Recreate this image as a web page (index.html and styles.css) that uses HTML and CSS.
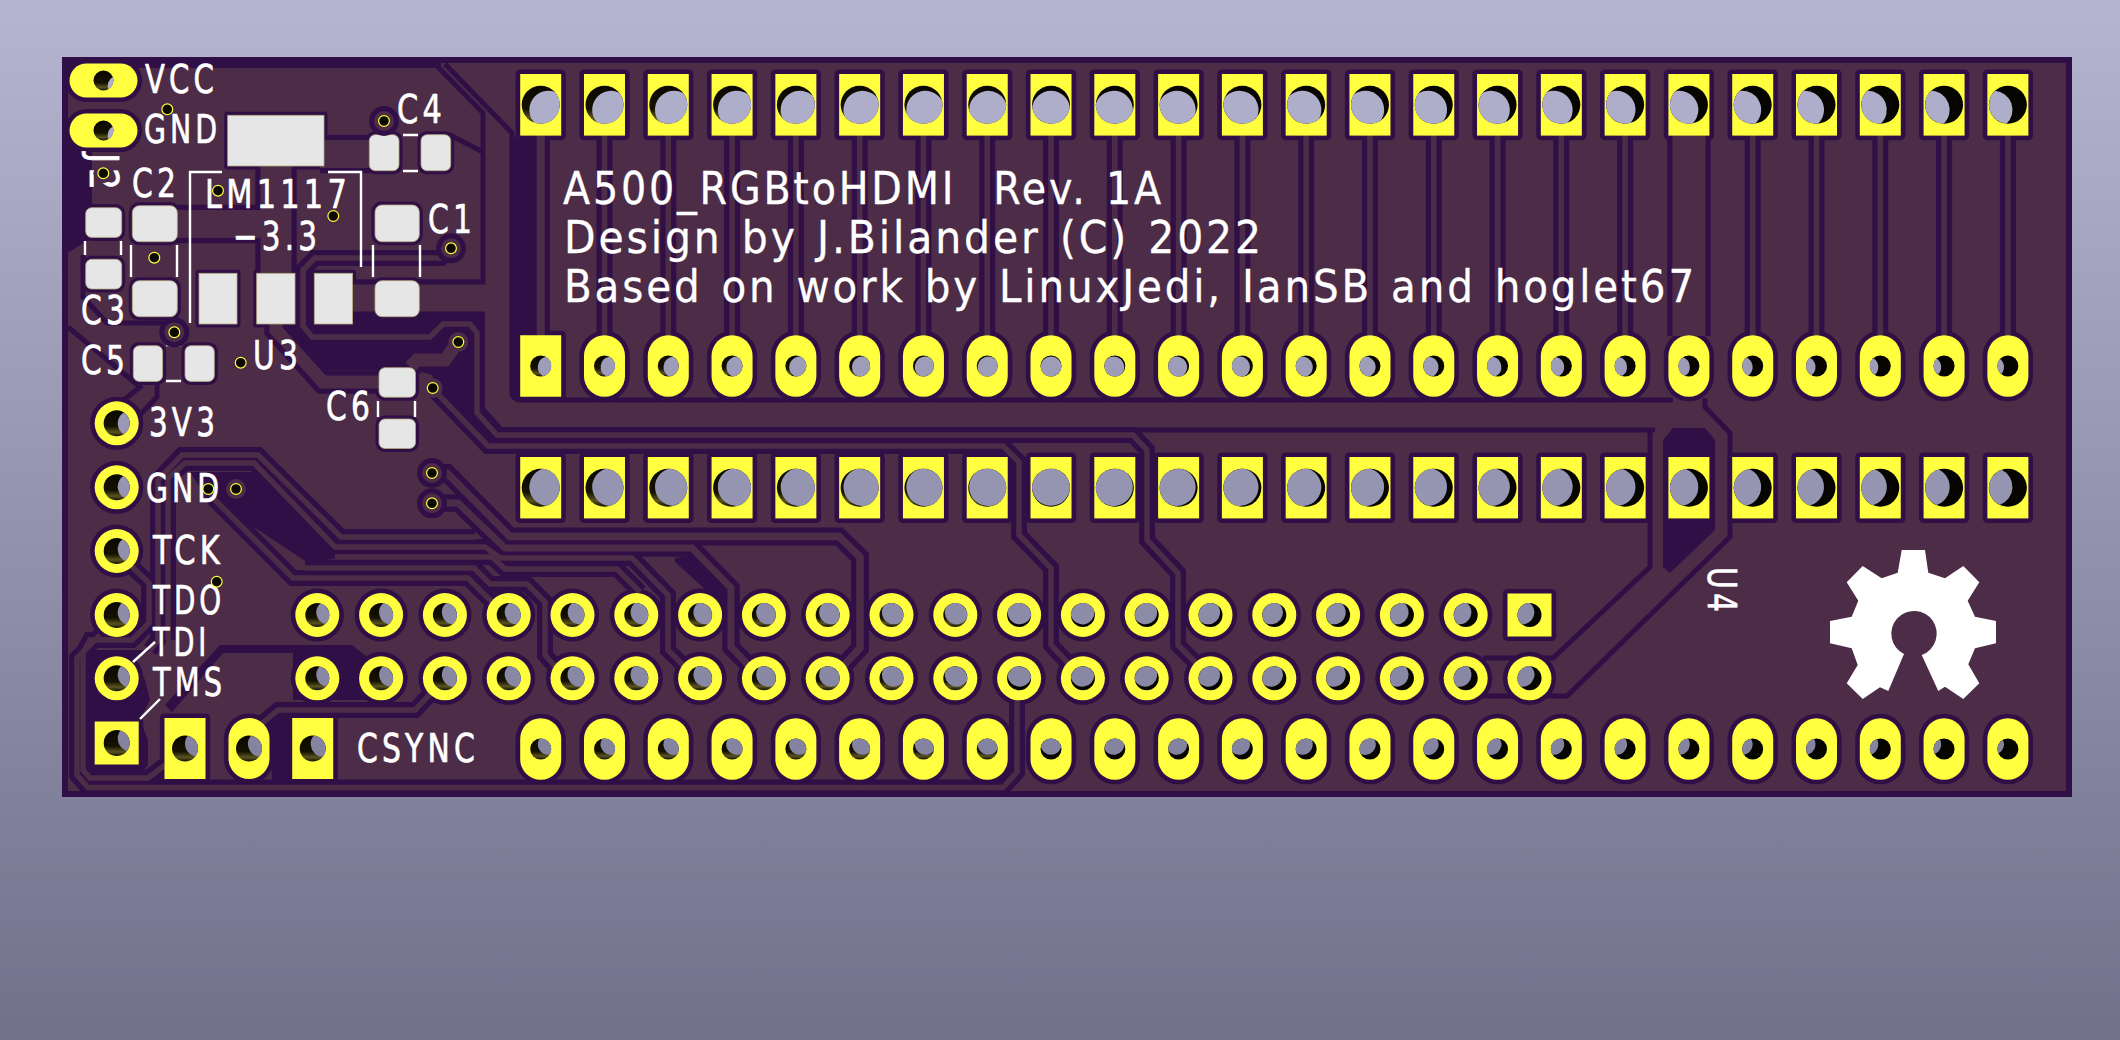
FILE: index.html
```html
<!DOCTYPE html>
<html lang="en">
<head>
<meta charset="utf-8">
<title>A500_RGBtoHDMI PCB</title>
<link rel="stylesheet" href="styles.css">
</head>
<body>
<main class="viewport">
<svg class="pcb" width="2120" height="1040" viewBox="0 0 2120 1040" xmlns="http://www.w3.org/2000/svg">
  <defs>
    <linearGradient id="wall" x1="0" y1="0" x2="0" y2="1">
      <stop offset="0" stop-color="#0a0800"/>
      <stop offset="0.62" stop-color="#151200"/>
      <stop offset="0.84" stop-color="#5a5420"/>
      <stop offset="1" stop-color="#141100"/>
    </linearGradient>
  </defs>

  <rect class="board" x="65" y="60" width="2004" height="734"/>

  <g class="no-copper">
    <path d="M62 57H441V68H62Z"/>
    <path d="M62 140L92 148V208L83 237L68 252H62Z"/>
    <path d="M500 125L512 137H537V335H520V400H512V137Z"/>
    <path d="M283 325H353V312H485V408L505 430H530V448H488L440 398L432 375L415 370H327Z"/>
    <path d="M190 472H253L332 552L345 558L307 562L217 503L197 483Z"/>
    <path d="M675 558L697 555L726 585V600H706V590L675 562Z"/>
    <path d="M91 650H150L135 660L145 680L150 700L140 720L148 740V765L142 773H90L88 770Z"/>
    <path d="M220 645H352L378 665V700H293V653H223L172 712L165 705Z"/>
    <path d="M270 718L278 712H292V780H272Z"/>
    <path d="M1663 440L1673 428H1705L1715 440V530L1670 573L1663 567Z"/>
  </g>

  <g class="copper-gap">
    <path d="M445 64L512 133V395L518 400H1673"/>
    <path d="M437 66L483 113V285"/>
    <path d="M450 135L483 152"/>
    <path d="M1130 430H1655"/>
    <path d="M1650 430V567L1553 658H1483"/>
    <path d="M1705 398V407L1730 433V537L1567 696H1483"/>
    <path d="M68 250L90 236H122"/>
    <path d="M83 255V297L107 323H165L174 332"/>
    <path d="M68 327L140 387L120 403"/>
    <path d="M157 383V397L138 417"/>
  </g>

  <g id="trace-halos"></g>
  <g id="pad-halos"></g>
  <g id="trace-cores"></g>
  <g id="pads"></g>
  <g id="holes"></g>

  <g class="silk-lines">
    <path d="M403 135H418M403 171H418"/>
    <path d="M373 245V277M420 245V277"/>
    <path d="M131 245V277M177 245V277"/>
    <path d="M85 241V255M121 241V255"/>
    <path d="M166 345H181M166 381H181"/>
    <path d="M378 401V417M415 401V417"/>
    <path d="M222 172H190V323"/>
    <path d="M328 172H361V267"/>
    <path d="M155 642L133 662"/>
    <path d="M160 699L140 719"/>
  </g>

  <g class="silk-text">
    <text x="145" y="92.5" textLength="73" lengthAdjust="spacingAndGlyphs">VCC</text>
    <text x="144" y="142.5" textLength="77" lengthAdjust="spacingAndGlyphs">GND</text>
    <text x="397" y="123" textLength="49" lengthAdjust="spacingAndGlyphs">C4</text>
    <text x="132" y="197" textLength="48" lengthAdjust="spacingAndGlyphs">C2</text>
    <text x="205" y="208" textLength="146" lengthAdjust="spacingAndGlyphs">LM1117</text>
    <text x="233" y="250" textLength="88" lengthAdjust="spacingAndGlyphs">−3.3</text>
    <text x="428" y="233" textLength="48" lengthAdjust="spacingAndGlyphs">C1</text>
    <text x="81" y="324" textLength="48" lengthAdjust="spacingAndGlyphs">C3</text>
    <text x="81" y="374" textLength="48" lengthAdjust="spacingAndGlyphs">C5</text>
    <text x="253" y="369" textLength="49" lengthAdjust="spacingAndGlyphs">U3</text>
    <text x="326" y="420" textLength="48" lengthAdjust="spacingAndGlyphs">C6</text>
    <text x="149" y="436" textLength="70" lengthAdjust="spacingAndGlyphs">3V3</text>
    <text x="146" y="502" textLength="77" lengthAdjust="spacingAndGlyphs">GND</text>
    <text x="153" y="564" textLength="71" lengthAdjust="spacingAndGlyphs">TCK</text>
    <text x="153" y="614" textLength="72" lengthAdjust="spacingAndGlyphs">TDO</text>
    <text x="153" y="656" textLength="57" lengthAdjust="spacingAndGlyphs">TDI</text>
    <text x="153" y="696" textLength="73" lengthAdjust="spacingAndGlyphs">TMS</text>
    <text x="357" y="762" textLength="122" lengthAdjust="spacingAndGlyphs">CSYNC</text>
    <text transform="translate(90 153) rotate(90)" textLength="42" lengthAdjust="spacingAndGlyphs">J2</text>
    <text transform="translate(1708 567) rotate(90)" textLength="49" lengthAdjust="spacingAndGlyphs">U4</text>
    <text class="title" x="563" y="204" textLength="601" lengthAdjust="spacingAndGlyphs">A500_RGBtoHDMI&#160;&#160;Rev. 1A</text>
    <text class="title" x="564" y="253" textLength="700" lengthAdjust="spacingAndGlyphs">Design by J.Bilander (C) 2022</text>
    <text class="title" x="564" y="302" textLength="1133" lengthAdjust="spacingAndGlyphs">Based on work by LinuxJedi, IanSB and hoglet67</text>
  </g>

  <path class="logo" d="M1901.7 550H1925L1928.3 572.7L1945 578.3L1963.3 566L1979.3 582.3L1967.7 600.7L1975 616.7L1996 621V643.3L1975 648.3L1968.3 664.3L1979.3 683.3L1963.3 699L1945 686.7L1938.3 691L1921.7 655A22.7 22.7 0 1 0 1904 654L1888.3 691L1880 687.3L1862.7 699L1846.7 683.3L1857.7 665L1851.7 648.3L1830 643.3V621L1851.7 616.7L1858.3 600.7L1846.7 582.3L1862.7 566L1881.7 578.3L1897.7 572.7Z"/>

  <g id="vias"></g>
</svg>
</main>
<script src="script.js"></script>
</body>
</html>
```

FILE: styles.css
```css
* { box-sizing: border-box; }
html, body { margin: 0; height: 100%; }
body { overflow: hidden; }
.viewport {
  display: flex;
  width: 2120px;
  height: 1040px;
  background: linear-gradient(#b5b5d1, #71718c);
}
.pcb { display: block; }
.board { fill: #4c2c47; stroke: #300f47; stroke-width: 6; }
.no-copper { fill: #300f47; }
.copper-gap { fill: none; stroke: #300f47; stroke-width: 5; }
.trace-halo { fill: none; stroke: #300f47; }
.trace-core { fill: none; stroke: #4c2c47; }
.pad-halo { fill: #300f47; }
.pad { fill: #ffff40; }
.smd { fill: #e6e6e6; stroke: #b3ab7e; stroke-width: 0.8; }
.hole-dark { fill: #060500; }
.hole-warm { fill: url(#wall); }
.silk-lines { fill: none; stroke: #fff; stroke-width: 2.4; }
.silk-text {
  fill: #fff;
  stroke: #fff;
  stroke-width: 0.7;
  stroke-linejoin: round;
  font-family: "DejaVu Sans", sans-serif;
  font-size: 39px;
  letter-spacing: 0.14em;
}
.silk-text .title {
  font-size: 44px;
  stroke-width: 0.3;
  letter-spacing: 0.07em;
  word-spacing: 0.08em;
}
.logo { fill: #fff; }
.via-ring-dark { fill: #300f47; }
.via-ring-pour { fill: #4c2c47; }
.via { fill: #0c0a00; stroke: #ffff40; stroke-width: 1.2; }
```

FILE: script.js
```js
var NS = "http://www.w3.org/2000/svg";
function el(parent, tag, attrs, cls) {
  var n = document.createElementNS(NS, tag);
  for (var k in attrs) n.setAttribute(k, attrs[k]);
  if (cls) n.setAttribute("class", cls);
  document.getElementById(parent).appendChild(n);
  return n;
}

/* ---------- traces: [core width, path] ---------- */
var traces = [
  [31, "M276 165V273"],
  [28, "M320 154H372"],
  [28, "M175 224H262"],
  [27, "M350 298H485"],
  [13, "M276 322V330L323 382H380"],
  [13, "M410 367L417 360H445L458 342"],
  [5.5, "M451 248L441 258H315L303 270V326L312 337H430L443 324H470L477 333V413L497 435H1133L1147 450V540L1178 573V645L1210 677"],
  [5.5, "M432 388L488 446H1003L1019 462V535L1051 568V645L1082 678"],
  [7.5, "M432 473H447L510 536.5H839L860 557V648L835 675"],
  [7, "M432 503H458L505 548H692L731 588V647L755 672"],
  [5.5, "M690 672L668 650V595L632 558H500L485 547H335L254 463H185L168 478V640"],
  [5.5, "M640 592L617 569H505L492 557H335"],
  [5.5, "M560 672L545 655V602L527 584H490L474 568H305"],
  [5.5, "M495 605L468 578H293L215 500L208 489"],
  [5.5, "M475 537H341L258 455H182L158 480V640L150 650"],
  [5.5, "M130 565L149 583V623L132 640H90L83 653V770L90 778H148L165 765"],
  [5.5, "M100 635L77 658V775L88 787.5H1003L1017 772V695"],
  [5.5, "M260 725L278 710H415L432 692"]
];

var colX = [];
for (var i = 0; i < 24; i++) colX.push(540.7 + 63.79 * i);
colX.forEach(function (x, i) {
  var w = i === 18 ? 33 : (i === 0 ? 8 : 5.6);
  traces.push([w, "M" + x.toFixed(1) + " 135V336"]);
});

traces.forEach(function (t) {
  el("trace-halos", "path", { d: t[1], "stroke-width": t[0] + 10.4 }, "trace-halo");
  el("trace-cores", "path", { d: t[1], "stroke-width": t[0] }, "trace-core");
});

/* ---------- through-hole pads ---------- */
var CX = 1050, CY = 438, K = 0.015;
function bg(y) {
  var c = Math.round(181 - 0.066 * y);
  var b = Math.round(209 - 0.066 * y);
  return "rgb(" + c + "," + c + "," + b + ")";
}
function lens(x, y, r) {
  var dx = (CX - x) * K, dy = (CY - y) * K;
  var d = Math.sqrt(dx * dx + dy * dy);
  if (d >= 2 * r || d === 0) return null;
  var mx = x + dx / 2, my = y + dy / 2;
  var h = Math.sqrt(r * r - d * d / 4);
  var nx = -dy / d, ny = dx / d;
  var p1 = (mx + nx * h).toFixed(2) + " " + (my + ny * h).toFixed(2);
  var p2 = (mx - nx * h).toFixed(2) + " " + (my - ny * h).toFixed(2);
  return "M" + p1 + "A" + r + " " + r + " 0 0 1 " + p2 + "A" + r + " " + r + " 0 0 1 " + p1 + "Z";
}
function pad(x, y, w, h, rx, r) {
  var grow = 4.6;
  el("pad-halos", "rect", {
    x: x - w / 2 - grow, y: y - h / 2 - grow, width: w + 2 * grow, height: h + 2 * grow,
    rx: rx ? rx + grow : grow
  }, "pad-halo");
  el("pads", "rect", { x: x - w / 2, y: y - h / 2, width: w, height: h, rx: rx }, "pad");
  el("holes", "circle", { cx: x, cy: y, r: r }, x < 1000 ? "hole-warm" : "hole-dark");
  var d = lens(x, y, r);
  if (d) el("holes", "path", { d: d, fill: bg(y) });
}

colX.forEach(function (x, i) {
  pad(x, 104.8, 41, 61.6, 0, 19);
  pad(x, 366, 41, 61.5, i === 0 ? 0 : 20.5, 10.5);
  pad(x, 487.7, 41, 61.4, 0, 19);
  pad(x, 749, 41, 61.5, 20.5, 10.5);
});
for (var j = 0; j < 20; j++) {
  var hx = 317.3 + 63.8 * j;
  if (j === 19) pad(hx, 615, 44, 43, 0, 12);
  else pad(hx, 615, 44, 44, 22, 12);
  pad(hx, 678.3, 44, 44, 22, 12);
}
pad(103.5, 80.5, 68, 34, 17, 10);
pad(103.5, 130.5, 68, 34, 17, 10);
[423.3, 487.3, 551, 615, 678.3].forEach(function (y) { pad(116.7, y, 44, 44, 22, 13); });
pad(116.7, 743, 44, 43, 0, 13);
pad(185, 748.5, 41, 61, 0, 13);
pad(249, 748.5, 41, 61, 20.5, 13);
pad(312.7, 748.5, 41, 61, 0, 13);

/* ---------- SMD pads: x, y, w, h, radius ---------- */
[
  [227.7, 115.3, 96.3, 50.7, 0],
  [199, 273.3, 38, 50.7, 0],
  [256.7, 273.3, 38.3, 50.7, 0],
  [314.3, 273.3, 38.3, 50.7, 0],
  [369.3, 134.7, 29.7, 36, 6],
  [421, 134.7, 29.7, 36, 6],
  [375, 205, 44.3, 36.7, 7],
  [375, 280.7, 44.3, 36, 7],
  [132.3, 205.7, 45, 36, 7],
  [132.3, 280.7, 45, 36, 7],
  [85.7, 207.7, 36, 29.7, 6],
  [85.7, 259.3, 36, 29.7, 6],
  [133.3, 345.7, 29.3, 35.7, 6],
  [185, 345.7, 29.3, 35.7, 6],
  [379, 367.7, 36.5, 29.5, 6],
  [379, 419, 36.5, 29.5, 6]
].forEach(function (p) {
  el("pad-halos", "rect", { x: p[0] - 3.5, y: p[1] - 3.5, width: p[2] + 7, height: p[3] + 7, rx: p[4] + 3 }, "pad-halo");
  el("pads", "rect", { x: p[0], y: p[1], width: p[2], height: p[3], rx: p[4] }, "smd");
});

/* ---------- vias: x, y, surround ---------- */
[
  [167.3, 109.3, ""], [218, 190.7, ""], [103.3, 173.3, "pour"], [384, 121, "both"],
  [333.3, 216, ""], [451, 248.3, "both"], [154.3, 257.7, ""], [174.3, 332.3, "both"],
  [240.7, 362.7, ""], [458.3, 342, "pour"], [432.7, 388, "pour"], [236, 489, "pour"],
  [208.3, 489, ""], [216.7, 581.7, ""], [432, 473, "both"], [432, 503.3, "both"]
].forEach(function (v) {
  if (v[2] === "both") el("vias", "circle", { cx: v[0], cy: v[1], r: 15 }, "via-ring-dark");
  if (v[2]) el("vias", "circle", { cx: v[0], cy: v[1], r: 10 }, "via-ring-pour");
  el("vias", "circle", { cx: v[0], cy: v[1], r: 5.4 }, "via");
});
```
